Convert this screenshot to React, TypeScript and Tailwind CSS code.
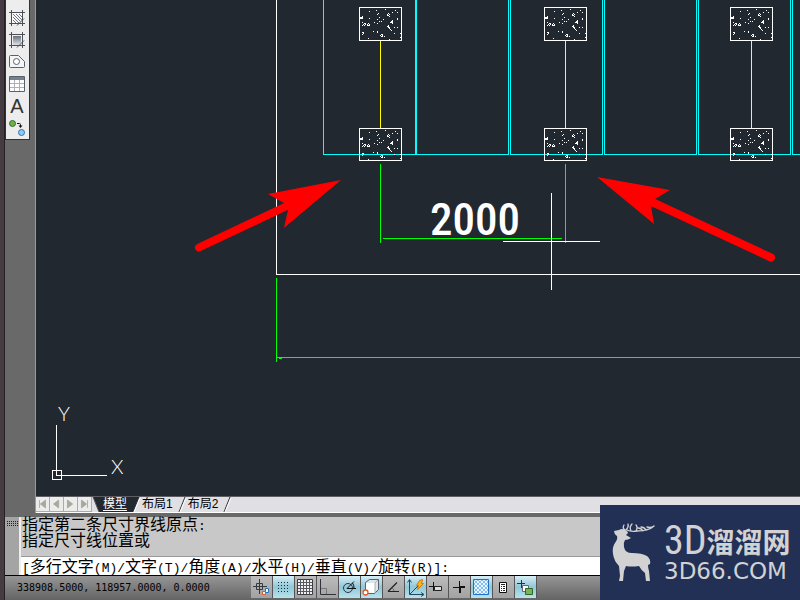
import { useState } from "react";
import type { ReactNode } from "react";

const drawTools: { name: string; icon: ReactNode }[] = [
  {
    name: "Hatch",
    icon: (
      <>
        <path d="M3 3h11v11H3z" fill="#f8f9fa" />
        <path d="M4 10l4 4M4 7l7 7M4 4l9 9M7 4l6 6M10 4l3 3" stroke="#6d7279" fill="none" />
        <path d="M2.500 0v16M13.500 0v16M0 2.500h16M0 13.500h16" stroke="#4b5057" fill="none" />
        <path d="M8 15l7-7v7z" fill="#efefef" />
        <path d="M8 15.500l7-7M13.500 9v6.500M8 13.500h7" stroke="#4b5057" fill="none" />
      </>
    ),
  },
  {
    name: "Gradient",
    icon: (
      <>
        <defs>
          <linearGradient id="toolGradient" x1="0" y1="0" x2="0" y2="1">
            <stop offset="0" stopColor="#68717b" />
            <stop offset="1" stopColor="#dfe3e6" />
          </linearGradient>
        </defs>
        <path d="M4 4h8v9H4z" fill="url(#toolGradient)" />
        <path d="M2.500 0v16M13.500 0v16M0 2.500h16M0 13.500h16" stroke="#4b5057" fill="none" />
        <path d="M9 14l5-5v5z" fill="#efefef" />
        <path d="M8 15.500l7-7M13.500 9v6.500M8 13.500h7" stroke="#4b5057" fill="none" />
      </>
    ),
  },
  {
    name: "Region",
    icon: (
      <>
        <path d="M.5 2.500q0-1 1-1h8l6 6v5q0 1-1 1h-13q-1 0-1-1z" fill="#f4f5f7" stroke="#596069" />
        <circle cx="7.5" cy="7.500" r="3" fill="#fff" stroke="#596069" />
      </>
    ),
  },
  {
    name: "Table",
    icon: (
      <>
        <path d="M.5.5h15v15h-15z" fill="#fff" stroke="#596069" />
        <path d="M1 1h14v3h-14z" fill="#77818c" />
        <path d="M5.5 4v11M10.5 4v11M1 7.5h14M1 11.5h14" stroke="#abb1b8" fill="none" />
      </>
    ),
  },
  { name: "Multiline Text", icon: null },
  {
    name: "Add Selected",
    icon: (
      <>
        <circle cx="3.5" cy="3.500" r="3" fill="#6fb04c" stroke="#35702a" />
        <circle cx="12.5" cy="12.500" r="3" fill="#8fc8f5" stroke="#2f77b8" />
        <path d="M8 3.500h2.5q1 0 1 1V7" stroke="#111" fill="none" />
        <path d="M9.5 5.500h4l-2 2.500z" fill="#111" />
      </>
    ),
  },
];

const statusTools: { name: string; on: boolean; icon: ReactNode }[] = [
  {
    name: "Infer Constraints",
    on: false,
    icon: (
      <>
        <path d="M8.500 2v15M2 9.500h14M5.500 6.500h6v6h-6z" stroke="#343a42" fill="none" />
        <path d="M14.500 11.500h3v4h-3z" fill="#fff" stroke="#2372b8" />
        <path d="M11.500 14.500h3v3h-3z" fill="#fff" stroke="#d95b2b" />
      </>
    ),
  },
  {
    name: "Snap Mode",
    on: true,
    icon: (
      <path
        d="M5 5.500h11M5 8.500h8M5 11.500h8M5 14.500h11M14.500 5v10"
        stroke="#1d2d3a"
        strokeDasharray="1 2"
        fill="none"
      />
    ),
  },
  {
    name: "Grid Display",
    on: false,
    icon: (
      <>
        <path d="M2.500 2.500h15v15h-15z" fill="#f1f1f1" stroke="#3b3f45" />
        <path d="M5.500 3v14M8.500 3v14M11.500 3v14M14.500 3v14M3 5.500h14M3 8.500h14M3 11.500h14M3 14.500h14" stroke="#55585d" fill="none" />
      </>
    ),
  },
  {
    name: "Ortho Mode",
    on: false,
    icon: (
      <>
        <path d="M3.500 2v15.500H19" stroke="#30343a" fill="none" />
        <path d="M4 11.500h5.500V17" stroke="#777" fill="none" />
      </>
    ),
  },
  {
    name: "Polar Tracking",
    on: true,
    icon: (
      <>
        <circle cx="9" cy="11" r="4.500" stroke="#334" fill="none" />
        <path d="M8 11.500h9M8 11.500l7-7M13.500 6q1.500 2 1.500 5" stroke="#111" fill="none" />
      </>
    ),
  },
  {
    name: "Object Snap",
    on: true,
    icon: (
      <>
        <path d="M4.500 5.500l4-3h9v10l-4 4h-9z" fill="#dfe3ea" stroke="#59616b" />
        <path d="M5 6h9v10H5z" fill="#fff" />
        <path d="M14 6v10M14 6l3-3" stroke="#a8afb8" fill="none" />
        <circle cx="4.500" cy="15.500" r="2.500" fill="#fff" stroke="#e05a25" strokeWidth="1.300" />
      </>
    ),
  },
  {
    name: "Object Snap Tracking",
    on: false,
    icon: (
      <>
        <path d="M5 14.500h11M5 14.500l9-9" stroke="#222" strokeWidth="1.200" fill="none" />
        <path d="M9 11q2 1 2 3" stroke="#666" fill="none" />
      </>
    ),
  },
  {
    name: "Dynamic UCS",
    on: true,
    icon: (
      <>
        <path d="M4.500 3v14.500H18M5 17l8-8M2.500 5.500l2-3 2 3M16 15.500l3 2-3 2" stroke="#1f4965" fill="none" />
        <path d="M14.500 3.500l3-1-1 4h2l-6 6 1-4h-2z" fill="#ffb21c" stroke="#d67b05" />
      </>
    ),
  },
  {
    name: "Dynamic Input",
    on: false,
    icon: (
      <>
        <path d="M2 9.500h8M6.500 5v9" stroke="#111" fill="none" />
        <path d="M7.500 9.500h7v4h-7z" fill="#ddd" stroke="#222" />
      </>
    ),
  },
  {
    name: "Lineweight",
    on: false,
    icon: (
      <>
        <path d="M4 10.500h6M10.500 4v6" stroke="#111" fill="none" />
        <path d="M10 10h6M11 9v7" stroke="#111" strokeWidth="2" fill="none" />
      </>
    ),
  },
  {
    name: "Transparency",
    on: true,
    icon: (
      <>
        <defs>
          <pattern id="checks" width="4" height="4" patternUnits="userSpaceOnUse">
            <path d="M0 0h4v4h-4z" fill="#e9f5ff" />
            <path d="M0 0h2v2h-2zM2 2h2v2h-2z" fill="#84bdf0" />
          </pattern>
        </defs>
        <path d="M2.500 2.500h15v15h-15z" fill="url(#checks)" stroke="#2370c4" />
      </>
    ),
  },
  {
    name: "Quick Properties",
    on: false,
    icon: (
      <>
        <path d="M6.500 5.500h7v10h-7z" fill="#fff" stroke="#111" />
        <path d="M8 7.500h4M8 9.500h1M10 9.500h2M8 11.500h1M10 11.500h2M8 13.500h1M10 13.500h2" stroke="#222" fill="none" />
      </>
    ),
  },
  {
    name: "Selection Cycling",
    on: true,
    icon: (
      <>
        <path d="M2 6.500h8M6.500 3v8" stroke="#234" fill="none" />
        <path d="M7.500 8.500h6v6h-6z" fill="#fff" stroke="#667" />
        <path d="M10.500 11.500h7v6h-7z" fill="#77b35a" stroke="#326822" />
      </>
    ),
  },
];

// aggregate specks of the concrete hatch, relative to the column corner
const specks = [
  [10, 4], [17, 3], [18, 7], [19, 6], [26, 2], [36, 3], [38, 5], [33, 5], [20, 10],
  [30, 7], [29, 8], [28, 7], [29, 6], [28, 8], [30, 9],
  [1, 10], [2, 11], [3, 9], [3, 10], [3, 11], [2, 10], [1, 11], [10, 11], [18, 12], [24, 12], [38, 11], [38, 12],
  [3, 15], [4, 17], [5, 16], [6, 16], [6, 17], [5, 18], [3, 18], [8, 17], [9, 16], [9, 18], [8, 18], [10, 17], [10, 18],
  [15, 15], [18, 16], [20, 14], [22, 14], [31, 15], [32, 14], [33, 13], [33, 14], [33, 15], [32, 15], [33, 16],
  [29, 18], [28, 19], [29, 19], [29, 20], [30, 20], [30, 21], [31, 22], [32, 23], [35, 20], [38, 20],
  [3, 25], [4, 25], [4, 26], [3, 27], [14, 24], [18, 24], [18, 25], [21, 28], [22, 27], [23, 27],
  [23, 29], [22, 29], [23, 28], [25, 29], [35, 26], [41, 26], [41, 30], [9, 31], [30, 32],
];

const columns = [359, 544, 730];

function Column({ x, y, height }: { x: number; y: number; height: number }) {
  return (
    <g transform={`translate(${x} ${y})`}>
      <rect width="42" height={height} fill="none" stroke="#fff" />
      {specks
        .filter(([, sy]) => sy < height)
        .map(([sx, sy]) => (
          <rect key={`${sx}-${sy}`} x={sx - 0.5} y={sy - 0.5} width="1" height="1" fill="#fff" />
        ))}
    </g>
  );
}

function Drawing() {
  return (
    <svg className="absolute inset-0 h-full w-full" role="img" aria-label="Drawing area">
      <g transform="translate(-35.5 .5)" fill="none" shapeRendering="crispEdges">
        <path d="M276 -1V274H4000" stroke="#fff" />
        <path
          d="M323 -1V154H508V-1M415 -1V154M416 -1V154M510 -1V154H602V-1M604 -1V154H696V-1M698 -1V154H790V-1M792 -1V154H4000"
          stroke="#0ff"
        />
        <path d="M380 40V128M565 40V128M751 40V128" stroke="#ff0" />
        {columns.map((x) => (
          <g key={x}>
            <Column x={x} y={7} height={33} />
            <Column x={x} y={128} height={32} />
          </g>
        ))}
        <path d="M380 163V242M565 163V242M382 238H561M276 277V361M276 357H4000M278 358h3" stroke="#0f0" />
        <path d="M551 192V289M502 241H599" stroke="#fff" />
        <path d="M52 470h9v9h-9zM56 424V475H106" stroke="#fff" />
      </g>
      <g transform="translate(-36 0)">
        <text
          x="430"
          y="235"
          fill="#fff"
          className="font-['Liberation_Sans_Narrow','Roboto_Condensed',sans-serif] text-[45px] font-medium"
        >
          2000
        </text>
        <text x="58" y="421" fill="#fff" className="font-[Lato,sans-serif] text-[20px] font-light">Y</text>
        <text x="111" y="474" fill="#fff" className="font-[Lato,sans-serif] text-[20px] font-light">X</text>
        <path d="M199 247.500L287 206M771 257.500L652 202" stroke="#f00" strokeWidth="8" strokeLinecap="round" />
        <path d="M341 180L268 194 284 203 288 210 284 228zM597 177L670 190 655 199 651 206 654 224z" fill="#f00" />
      </g>
    </svg>
  );
}

function LayoutTabs() {
  const [tab, setTab] = useState("模型");

  return (
    <div className="flex h-4 items-stretch border-t border-[#5e5e62] bg-[#dfdfe4]">
      {["M4 3v9M11 3v9L5 7.500z", "M10 3v9L4 7.500z", "M4 3v9l6-4.500z", "M11 3v9M4 3v9l6-4.500z"].map((d, i) => (
        <button
          key={i}
          aria-label={["First", "Previous", "Next", "Last"][i]}
          className="w-3.5 border-r border-b border-[#aaa] bg-[#ececec]"
        >
          <svg width="13" height="14" viewBox="0 0 15 15">
            <path d={d} fill="#aaa89c" stroke="#aaa89c" />
          </svg>
        </button>
      ))}
      {["模型", "布局1", "布局2"].map((name, i) => (
        <div key={name} className="flex">
          {i === 0 && (
            <svg width="10" height="15">
              <path d="M1 0h9v15h-3z" fill="#212830" />
              <path d="M1 0l6 15" stroke="#555" fill="none" />
            </svg>
          )}
          <button
            onClick={() => setTab(name)}
            className={`px-px font-['Liberation_Sans','Noto_Sans_CJK_SC',sans-serif] text-xs leading-[15px] ${
              i === 0 ? "bg-[#212830] text-white" : "text-black"
            } ${tab === name ? "underline underline-offset-2" : ""}`}
          >
            {name}
          </button>
          <svg width="13" height="15">
            {i === 0 && <path d="M0 0h11l-6 15h-5z" fill="#212830" />}
            <path d="M11 0L5 15" stroke="#333" fill="none" />
            <path d="M12 1L6 15" stroke="#fff" fill="none" />
          </svg>
        </div>
      ))}
    </div>
  );
}

// full-width characters are twice as wide as the latin ones
function ConsoleText({ text }: { text: string }) {
  return (
    <>
      {text.split(/([\x20-\x7e]+)/).map((part, i) => (
        <span key={i} className={i % 2 ? "font-['Liberation_Mono',monospace] text-[13px]" : "text-base leading-3"}>
          {part}
        </span>
      ))}
    </>
  );
}

function CommandPanel() {
  return (
    <section className="flex border-b border-black bg-[#c8c8c8] font-['Noto_Sans_CJK_SC',sans-serif] text-black">
      <div className="w-4 border-r-2 border-[#eee] bg-[#a4a4a4] pt-1 pl-0.5">
        <svg width="12" height="5">
          <path d="M0 .5h12M0 2.500h12M0 4.500h12" stroke="#222" strokeDasharray="1 1" />
        </svg>
      </div>
      <div className="flex-1">
        <div className="h-10 border-b border-[#999] px-px leading-3">
          <p className="h-4 whitespace-nowrap"><ConsoleText text="指定第二条尺寸界线原点:" /></p>
          <p className="h-4 whitespace-nowrap"><ConsoleText text="指定尺寸线位置或" /></p>
        </div>
        <div className="flex h-[18px] bg-white px-px leading-4">
          <label htmlFor="command" className="whitespace-nowrap">
            <ConsoleText text="[多行文字(M)/文字(T)/角度(A)/水平(H)/垂直(V)/旋转(R)]:" />
          </label>
          <input id="command" className="min-w-0 flex-1 bg-transparent pl-1 text-sm outline-none" />
        </div>
      </div>
    </section>
  );
}

function StatusBar() {
  const [active, setActive] = useState(statusTools.map((tool) => tool.on));

  return (
    <footer className="flex h-6 items-start bg-linear-to-b from-[#969696] to-[#646464]">
      <p className="w-[246px] pl-3 font-['DejaVu_Sans_Mono',monospace] text-[10px] leading-6 whitespace-nowrap text-black">
        338908.5000, 118957.0000, 0.0000
      </p>
      {statusTools.map((tool, i) => (
        <button
          key={tool.name}
          aria-label={tool.name}
          aria-pressed={active[i]}
          onClick={() => setActive(active.map((on, j) => (i === j ? !on : on)))}
          className={`h-[22px] w-[22px] border-r border-[#555] bg-linear-to-b ${
            active[i] ? "from-[#d8eef5] via-[#8fc8d8] to-[#b8e2ec]" : "from-[#bcbcbc] to-[#a2a2a2]"
          }`}
        >
          <svg width="21" height="21">{tool.icon}</svg>
        </button>
      ))}
    </footer>
  );
}

function Watermark() {
  return (
    <div className="absolute right-0 bottom-0 flex h-[95px] w-[200px] items-center bg-[#223056] pl-3 text-[#d2d2d2]">
      <svg width="44" height="60" viewBox="0 0 44 60" className="shrink-0">
        <path
          d="M2 8L7 7Q10 5 13 7Q16 8 16 10L14 12L19 15Q16 17 13 17Q11 20 12 24Q13 30 20 30Q30 30 35 33Q39 36 38 41L36 42Q36 45 37 48L38 58H34L33 50Q29 47 27 43Q19 44 14 43L12 48L11 58H7L8 53L7 43Q2 38 1 31Q0 24 3 20Q6 16 5 13Q2 11 2 8z"
          fill="#d2d2d2"
        />
        <path
          d="M13 7Q10 5 12 2M14 7Q17 4 16 1M15 7Q19 9 25 8Q31 8 34 7Q39 6 42 3M19 8Q17 4 20 1M24 8Q26 4 24 2M31 8Q29 5 26 5M34 7Q32 4 29 4M42 3Q39 5 35 4"
          stroke="#d2d2d2"
          strokeWidth="1.300"
          strokeLinecap="round"
          fill="none"
        />
      </svg>
      <div className="pl-2">
        <p className="flex h-9 items-center whitespace-nowrap">
          <span className="font-['Liberation_Sans_Narrow','Roboto_Condensed',sans-serif] text-[40px] leading-9">3D</span>
          <span className="font-['Noto_Sans_CJK_SC',sans-serif] text-[28px] leading-8 font-bold">溜溜网</span>
        </p>
        <p className="font-['DejaVu_Sans',sans-serif] text-[23px] leading-6">3D66.COM</p>
      </div>
    </div>
  );
}

export default function App() {
  return (
    <div className="relative flex min-h-screen overflow-hidden bg-[#696969]">
      <div className="w-[5px] border-r border-[#262024] bg-[#453b42]" />
      <div className="flex min-w-0 flex-1 flex-col">
        <div className="flex flex-1">
          <aside className="w-[30px]">
            <div className="flex w-[25px] flex-col border border-t-0 border-[#333] bg-[#ededed] pt-[7px]">
              {drawTools.map((tool) => (
                <button
                  key={tool.name}
                  aria-label={tool.name}
                  className="flex h-[22px] w-full items-center pl-[3px] font-['Liberation_Sans',sans-serif] text-xl leading-none text-[#333]"
                >
                  {tool.icon ? <svg width="16" height="16">{tool.icon}</svg> : <span className="w-4 text-center">A</span>}
                </button>
              ))}
            </div>
          </aside>
          <div className="flex min-w-0 flex-1 flex-col border-l border-[#9c9a96]">
            <main className="relative flex-1 overflow-hidden bg-[#212830]">
              <Drawing />
            </main>
            <LayoutTabs />
            <div className="h-px bg-white" />
          </div>
        </div>
        <div className="h-1" />
        <CommandPanel />
        <StatusBar />
      </div>
      <Watermark />
    </div>
  );
}
